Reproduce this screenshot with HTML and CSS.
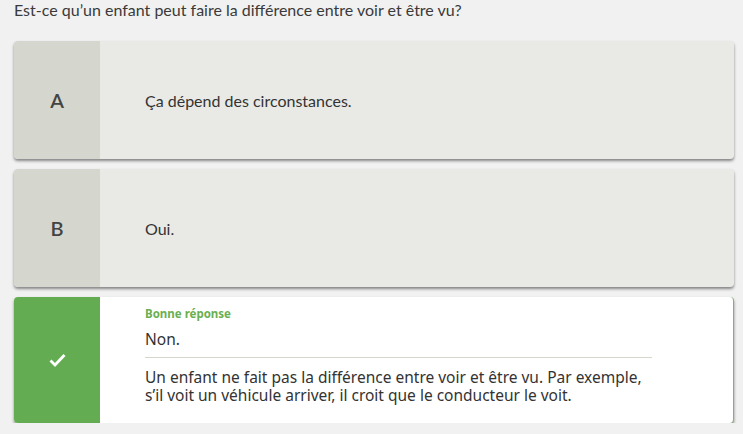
FILE: index.html
```html
<!DOCTYPE html>
<html lang="fr">
<head>
<meta charset="utf-8">
<link rel="stylesheet" href="styles.css">
</head>
<body>
<div class="quiz">
  <p class="question">Est-ce qu’un enfant peut faire la différence entre voir et être vu?</p>
  <div class="card">
    <div class="letter">A</div>
    <div class="body"><span class="answer">Ça dépend des circonstances.</span></div>
  </div>
  <div class="card">
    <div class="letter">B</div>
    <div class="body"><span class="answer">Oui.</span></div>
  </div>
  <div class="card correct">
    <div class="letter">
      <svg width="17" height="14" viewBox="0 0 17 14"><path d="M1.5 7.5 L6 12 L15.5 2" fill="none" stroke="#fff" stroke-width="2.8"/></svg>
    </div>
    <div class="body">
      <div class="label">Bonne réponse</div>
      <div class="chosen">Non.</div>
      <div class="explain">Un enfant ne fait pas la différence entre voir et être vu. Par exemple, s’il voit un véhicule arriver, il croit que le conducteur le voit.</div>
    </div>
  </div>
</div>
</body>
</html>
```
FILE: styles.css
```css
html, body { margin: 0; padding: 0; }
body { background: #f1f1f1; font-family: Lato, "Liberation Sans", sans-serif; color: #333; }
.quiz { padding: 0 9px 0 14px; display: flex; flex-direction: column; gap: 10px; }
.question { margin: 0 0 12px; padding-top: 1px; font-size: 16px; line-height: 18px; color: #3a3a3a; }
.card { display: flex; height: 118px; border-radius: 4px; overflow: hidden; background: #e9eae6; box-shadow: 0 2px 3px rgba(0,0,0,0.45); }
.letter { width: 86px; flex: none; background: #d5d7ce; display: flex; align-items: center; justify-content: center; font-size: 20px; font-weight: 600; color: #444; box-sizing: border-box; }
.body { flex: 1; display: flex; align-items: center; padding-left: 45px; }
.answer { font-size: 16px; color: #333; }
.correct { height: 126px; background: #fff; border-right: 1px solid #7ab867; }
.correct .letter { background: #63ac52; padding-top: 0; }
.correct .body { flex-direction: column; align-items: flex-start; justify-content: flex-start; padding-top: 10px; font-family: "Noto Sans", "Open Sans", sans-serif; }
.label { font-size: 11.5px; font-weight: 700; color: #6aaf50; line-height: 14px; }
.chosen { font-size: 15.5px; line-height: 20px; margin-top: 8px; width: 507px; padding-bottom: 8px; border-bottom: 1px solid #d6d6cc; color: #333; }
.explain { font-size: 15.5px; line-height: 18px; margin-top: 10px; width: 510px; color: #333; }
```
